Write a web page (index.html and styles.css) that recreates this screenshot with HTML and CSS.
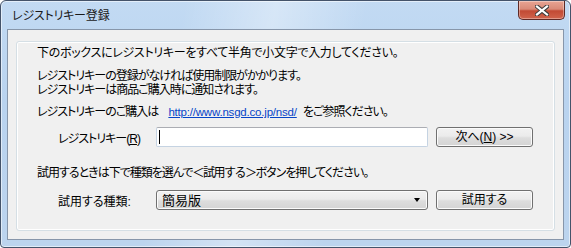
FILE: index.html
```html
<!DOCTYPE html>
<html lang="ja">
  <head>
    <meta charset="UTF-8" />
    <title>レジストリキー登録</title>
    <link rel="stylesheet" href="styles.css">
  </head>
  <body>
    <div class="window">
      <div class="titlebar">
        <span class="title">レジストリキー登録</span>
        <div class="close-btn">
          <svg width="14" height="11" viewBox="0 0 14 11">
            <path d="M2 1.5 L12 9.5 M12 1.5 L2 9.5" stroke="#3b3b3b" stroke-width="4.2" stroke-linecap="square" fill="none"/>
            <path d="M2 1.5 L12 9.5 M12 1.5 L2 9.5" stroke="#ffffff" stroke-width="2.2" stroke-linecap="square" fill="none"/>
          </svg>
        </div>
      </div>

      <div class="client">
        <div class="group">
          <p class="line intro">下のボックスにレジストリキーをすべて半角で小文字で入力してください。</p>
          <div class="notice">
            <p class="line tight">レジストリキーの登録がなければ使用制限がかかります。</p>
            <p class="line tight">レジストリキーは商品ご購入時に通知されます。</p>
          </div>
          <p class="line buy">
            <span class="tight">レジストリキーのご購入は</span><a class="link">http://www.nsgd.co.jp/nsd/</a><span class="tight">をご参照ください。</span>
          </p>

          <div class="form-row key-row">
            <label class="field-label tight">レジストリキー(<u>R</u>)</label>
            <div class="textbox"><span class="caret"></span></div>
            <button class="btn">次へ(<u>N</u>) &gt;&gt;</button>
          </div>

          <p class="line trial tight">試用するときは下で種類を選んで<span class="bracket">＜試用する＞</span>ボタンを押してください。</p>

          <div class="form-row">
            <label class="field-label">試用する種類:</label>
            <div class="combo">
              <span class="combo-text">簡易版</span>
              <span class="combo-arrow"></span>
            </div>
            <button class="btn">試用する</button>
          </div>
        </div>
      </div>
    </div>
  </body>
</html>
```

FILE: styles.css
```css
:root {
  --frame-border: #44536a;
  --client-border: #8796aa;
  --dialog-bg: #f0f0f0;
  --text-color: #000000;
  --link-color: #0645c8;
  --btn-border: #707070;
  --font-ui: "Liberation Sans", "Noto Sans CJK JP", sans-serif;
}

* {
  margin: 0;
  padding: 0;
  box-sizing: border-box;
}

body {
  width: 571px;
  height: 248px;
  overflow: hidden;
  font-family: var(--font-ui);
  font-size: 12px;
  color: var(--text-color);
  background: #ffffff;
}

/* window frame */
.window {
  width: 571px;
  height: 248px;
  border: 1px solid var(--frame-border);
  border-radius: 6px 6px 4px 4px;
  padding: 0 6px 7px 6px;
  display: flex;
  flex-direction: column;
  background:
    linear-gradient(100deg, rgba(255, 255, 255, 0) 30%, rgba(255, 255, 255, 0.35) 45%, rgba(255, 255, 255, 0) 60%),
    linear-gradient(180deg, #c2daf3 0%, #b9d3ef 40%, #bcd4ee 100%);
  box-shadow: inset 0 0 0 1px rgba(255, 255, 255, 0.55);
}

.titlebar {
  height: 28px;
  display: flex;
  align-items: flex-start;
  flex-shrink: 0;
}

.title {
  padding: 8px 0 0 5px;
  font-size: 12px;
  line-height: 14px;
  color: #1a1a1a;
  font-feature-settings: "palt";
  letter-spacing: -0.2px;
}

.close-btn {
  margin-left: auto;
  margin-right: -1px;
  width: 47px;
  height: 19px;
  border: 1px solid #5e2a26;
  border-top: none;
  border-radius: 0 0 5px 5px;
  display: flex;
  align-items: center;
  justify-content: center;
  background: linear-gradient(180deg, #e8a493 0%, #d98a78 45%, #c24a34 55%, #d0644c 100%);
  box-shadow: inset 0 0 0 1px rgba(255, 255, 255, 0.35);
}

/* client area */
.client {
  flex: 1;
  border: 1px solid var(--client-border);
  background-color: var(--dialog-bg);
  padding: 11px 8px 7px 8px;
}

.group {
  height: 190px;
  border: 1px solid #d5dfe5;
  border-radius: 3px;
  box-shadow: inset 0 0 0 1px #ffffff;
  padding: 4px 0 0 20px;
}

.line {
  font-size: 12px;
  line-height: 14px;
  font-feature-settings: "palt";
  letter-spacing: -0.3px;
  white-space: nowrap;
}

.tight {
  letter-spacing: -1px;
}

.notice {
  margin-top: 9px;
}

.buy {
  margin-top: 8px;
  display: flex;
}

.link {
  margin-left: 10px;
  margin-right: 6px;
  font-size: 11.5px;
  color: var(--link-color);
  text-decoration: underline;
  letter-spacing: -0.2px;
}

.trial {
  margin-top: 19px;
}

.bracket {
  font-feature-settings: normal;
  letter-spacing: -1.5px;
}

/* label + field + button rows */
.form-row {
  display: flex;
  align-items: center;
  margin-top: 10px;
  padding-left: 21px;
  height: 20px;
}

.key-row {
  margin-top: 8px;
}

.field-label {
  width: 98px;
  font-feature-settings: "palt";
  white-space: nowrap;
}

.textbox {
  width: 272px;
  height: 20px;
  background: #ffffff;
  border: 1px solid #c5d3e2;
  border-top-color: #abadb3;
  border-radius: 2px;
  display: flex;
  align-items: center;
  padding-left: 2px;
}

.caret {
  width: 1px;
  height: 14px;
  background: #000000;
}

.btn {
  margin-left: 8px;
  width: 97px;
  height: 20px;
  border: 1px solid var(--btn-border);
  border-radius: 3px;
  background: linear-gradient(180deg, #f2f2f2 0%, #ebebeb 45%, #dddddd 55%, #d4d4d4 100%);
  box-shadow: inset 0 0 0 1px #fbfbfb;
  font-family: var(--font-ui);
  font-size: 12px;
  line-height: 14px;
  color: var(--text-color);
  font-feature-settings: "palt";
  display: flex;
  align-items: center;
  justify-content: center;
}

.combo {
  width: 272px;
  height: 20px;
  border: 1px solid var(--btn-border);
  border-radius: 3px;
  background: linear-gradient(180deg, #f2f2f2 0%, #ebebeb 45%, #dddddd 55%, #d4d4d4 100%);
  box-shadow: inset 0 0 0 1px #fbfbfb;
  display: flex;
  align-items: center;
  padding: 0 6px 0 5px;
}

.combo-text {
  flex: 1;
  font-size: 13px;
  line-height: 15px;
}

.combo-arrow {
  width: 0;
  height: 0;
  border-left: 3.5px solid transparent;
  border-right: 3.5px solid transparent;
  border-top: 4px solid #000000;
  margin-right: 1px;
}
```
